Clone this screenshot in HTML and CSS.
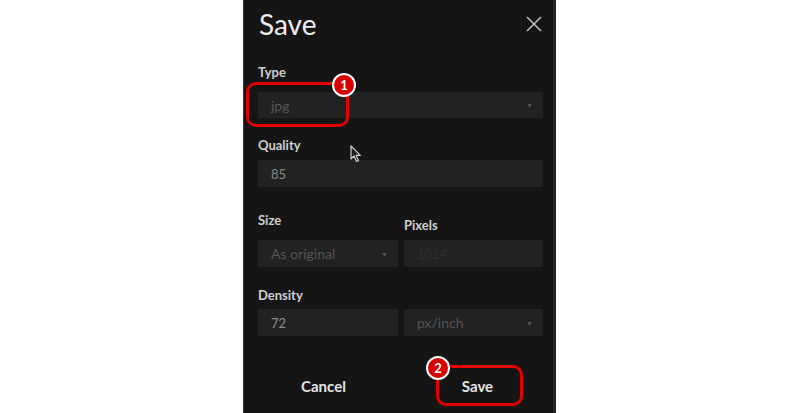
FILE: index.html
```html
<!DOCTYPE html>
<html lang="en">
<head>
  <meta charset="UTF-8">
  <meta name="viewport" content="width=device-width, initial-scale=1.0">
  <title>Save</title>
  <link rel="stylesheet" href="styles.css">
</head>
<body>
  <div class="dialog">
    <div class="header">
      <h1>Save</h1>
      <svg class="close" width="16" height="16" viewBox="0 0 16 16">
        <path d="M1 1 L15 15 M15 1 L1 15" stroke="#bdbdbd" stroke-width="1.6" fill="none"/>
      </svg>
    </div>

    <div class="group group-type">
      <div class="label">Type</div>
      <div class="field select"><span class="muted">jpg</span><span class="arrow">&#9660;</span></div>
    </div>

    <div class="group group-quality">
      <div class="label">Quality</div>
      <div class="field"><span class="value">85</span></div>
    </div>

    <div class="row group-size">
      <div class="col">
        <div class="label">Size</div>
        <div class="field select"><span class="muted">As original</span><span class="arrow">&#9660;</span></div>
      </div>
      <div class="col">
        <div class="label label-pixels">Pixels</div>
        <div class="field"><span class="faint">1024</span></div>
      </div>
    </div>

    <div class="row group-density">
      <div class="col">
        <div class="label">Density</div>
        <div class="field"><span class="value">72</span></div>
      </div>
      <div class="col">
        <div class="label label-empty"></div>
        <div class="field select"><span class="muted">px/inch</span><span class="arrow">&#9660;</span></div>
      </div>
    </div>

    <div class="footer">
      <button type="button">Cancel</button>
      <button type="button">Save</button>
    </div>

    <!-- annotations drawn over the dialog -->
    <div class="mark mark-type"></div>
    <div class="badge badge-type">1</div>
    <div class="mark mark-save"></div>
    <div class="badge badge-save">2</div>

    <svg class="cursor" width="12" height="18" viewBox="0 0 12 18">
      <path d="M1 1 L1 14 L4 11 L6.5 16.5 L8.5 15.6 L6 10.3 L10.3 10.3 Z" fill="#1a1a1a" stroke="#cfcfcf" stroke-width="1.2" stroke-linejoin="round"/>
    </svg>
  </div>
</body>
</html>
```

FILE: styles.css
```css
body {
  margin: 0;
  background: #fff;
  font-family: Lato, "Open Sans", sans-serif;
}
.dialog {
  position: relative;
  width: 313px;
  height: 413px;
  margin-left: 243px;
  box-sizing: border-box;
  padding: 0 10px 0 14px;
  background: #151515;
  border-left: 1px solid #3a3a3a;
  border-right: 3px solid #232323;
  display: flex;
  flex-direction: column;
}
.header {
  display: flex;
  justify-content: space-between;
  align-items: center;
  height: 48px;
}
.header h1 {
  margin: 0 0 0 1px;
  font-size: 28px;
  font-weight: 400;
  color: #ececec;
}
.close {
  margin-right: 1px;
}
.label {
  font-size: 13px;
  line-height: 16px;
  font-weight: 700;
  color: #cfcfcf;
  height: 16px;
}
.field {
  display: flex;
  align-items: center;
  justify-content: space-between;
  height: 27px;
  padding: 0 10px 0 13px;
  background: #222;
  font-size: 13px;
}
.value {
  color: #8a8a8a;
}
.muted {
  color: #555;
  font-size: 14px;
}
.faint {
  color: #2e2e2e;
}
.arrow {
  color: #555;
  font-size: 7px;
}
.group-type {
  margin-top: 16px;
}
.group-type .label {
  margin-bottom: 12px;
}
.group-type .field {
  height: 26px;
}
.group-quality {
  margin-top: 19px;
}
.group-quality .label {
  margin-bottom: 7px;
}
.row {
  display: grid;
  grid-template-columns: 140px 139px;
  column-gap: 6px;
}
.group-size {
  margin-top: 25px;
}
.group-size .label {
  margin-bottom: 12px;
}
.group-size .label-pixels {
  margin-top: 5px;
  margin-bottom: 7px;
}
.group-density {
  margin-top: 20px;
}
.group-density .label {
  margin-bottom: 6px;
}
.footer {
  display: flex;
  justify-content: space-between;
  margin-top: 30px;
}
.footer button {
  width: 131px;
  height: 40px;
  padding: 0;
  border: none;
  background: transparent;
  color: #e2e2e2;
  font-family: Lato, "Open Sans", sans-serif;
  font-size: 15px;
  font-weight: 700;
}
.mark {
  position: absolute;
  border: 3px solid #e40000;
  border-radius: 10px;
  box-sizing: border-box;
}
.mark-type {
  left: 2px;
  top: 82px;
  width: 103px;
  height: 45px;
}
.mark-save {
  left: 192px;
  top: 365px;
  width: 87px;
  height: 41px;
}
.badge {
  position: absolute;
  width: 20px;
  height: 20px;
  border: 2px solid #fff;
  border-radius: 50%;
  background: #d90000;
  color: #fff;
  font-size: 13px;
  font-weight: 700;
  line-height: 20px;
  text-align: center;
}
.badge-type {
  left: 88px;
  top: 73px;
}
.badge-save {
  left: 182px;
  top: 356px;
}
.cursor {
  position: absolute;
  left: 106px;
  top: 145px;
}
```
